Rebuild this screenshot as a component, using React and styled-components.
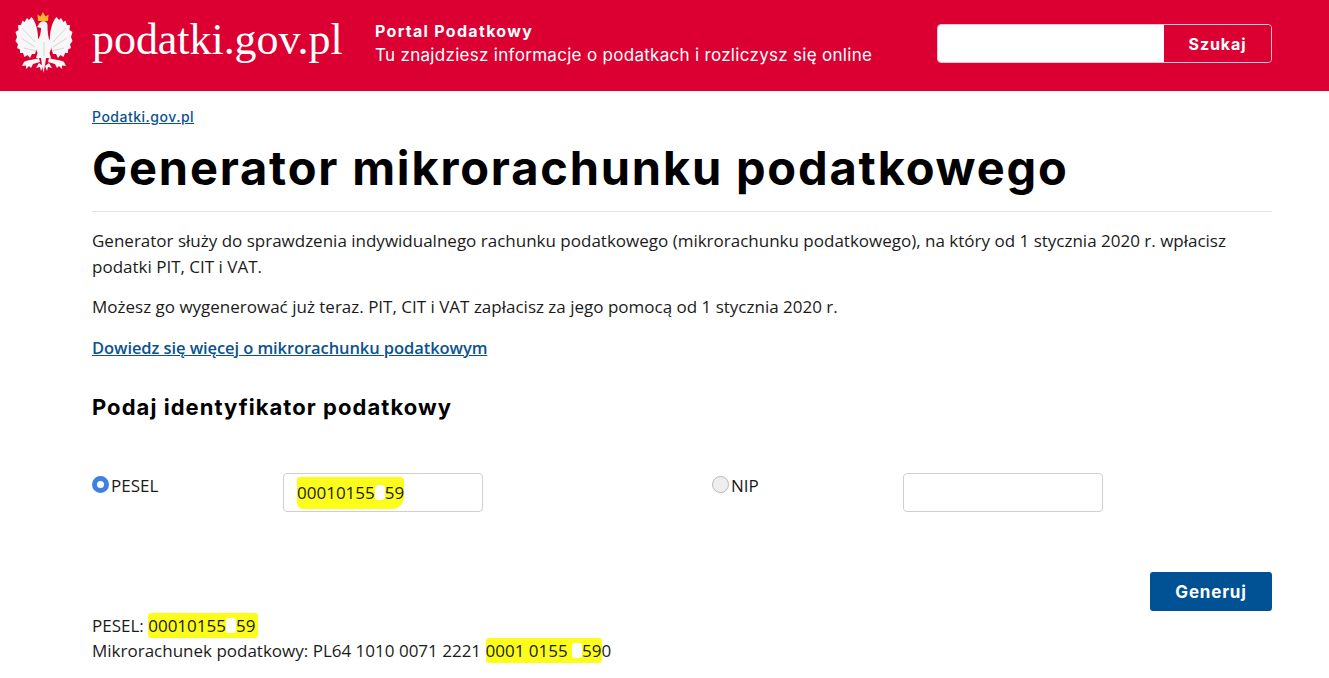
import React from "react";
import styled, { createGlobalStyle } from "styled-components";

const Global = createGlobalStyle`
  html, body { margin: 0; padding: 0; background: #fff; }
  body { font-family: "Open Sans", "Liberation Sans", sans-serif; color: #1b1b1b; font-size: 17px; }
`;
const display = `Inter, "Open Sans", sans-serif`;

const Header = styled.header`
  height: 91px; background: #dc0032; display: flex; align-items: center; color: #fff;
`;
const Brand = styled.div`
  width: 375px; flex: none; display: flex; align-items: center; padding-left: 15px; box-sizing: border-box;
`;
const Logo = styled.div`
  font-family: "Liberation Serif", serif; font-size: 44px; letter-spacing: -0.05px; margin-left: 19px; line-height: 1; margin-top: -12px; white-space: nowrap;
`;
const Tagline = styled.div`
  width: 562px; flex: none; font-family: ${display}; margin-top: -5px;
`;
const TagTitle = styled.div`
  font-size: 16px; font-weight: 700; line-height: 24px; letter-spacing: 1.3px;
`;
const TagText = styled.div`
  font-size: 17px; line-height: 25px; letter-spacing: 0.3px; white-space: nowrap; font-weight: 400;
`;
const Search = styled.form`
  display: flex; width: 335px; height: 39px; box-sizing: border-box; border: 1px solid #f7c6d2; border-radius: 4px; overflow: hidden; margin-top: -4px;
`;
const SearchInput = styled.div`
  flex: none; width: 226px; background: #fff;
`;
const SearchButton = styled.button`
  flex: 1; border: 0; background: #dc0032; color: #fff; font-family: ${display}; font-size: 16px; font-weight: 700; letter-spacing: 0.9px; padding: 0;
`;
const Main = styled.main`
  padding: 0 57px 0 92px;
`;
const Crumb = styled.a`
  display: block; padding-top: 18px; font-family: ${display}; font-size: 14px; font-weight: 500; line-height: 16px; color: #0b5290; text-decoration: underline; width: max-content; letter-spacing: 0.5px;
`;
const Title = styled.h1`
  margin: 17px 0 0; font-family: ${display}; font-size: 47px; line-height: 52px; font-weight: 700; color: #000; letter-spacing: 1.8px; padding-bottom: 17px; border-bottom: 1px solid #e2e2e2; white-space: nowrap;
`;
const Para = styled.p`
  margin: 0 0 14px; font-size: 17px; line-height: 26px;
  &:first-of-type { margin-top: 16px; }
`;
const BodyLink = styled.a`
  font-weight: 600; color: #0b5290; text-decoration: underline; font-size: 16.5px; line-height: 26px; display: block; margin-top: 15px; letter-spacing: -0.08px;
`;
const SubTitle = styled.h2`
  margin: 32px 0 0; font-family: ${display}; font-size: 22px; line-height: 28px; font-weight: 700; color: #000; letter-spacing: 1.05px;
`;
const FormGrid = styled.div`
  display: grid; grid-template-columns: 191px 200px 229px 191px 200px; margin-top: 52px; align-items: start;
`;
const RadioLabel = styled.label`
  display: flex; align-items: flex-start; line-height: 26px; gap: 2px; font-size: 17px;
`;
const Radio = styled.span`
  width: 17px; height: 17px; border-radius: 50%; box-sizing: border-box; margin-top: 3px; flex: none;
  ${p => p.$on
    ? `background: #fff; border: 5px solid #3f7fe8;`
    : `background: #eee; border: 1px solid #b9b9b9;`}
`;
const FieldBox = styled.div`
  height: 39px; box-sizing: border-box; border: 1px solid #cfcfcf; border-radius: 4px; background: #fff; padding: 0 13px; display: flex; align-items: center; font-size: 17px;
`;
const Mark = styled.span`
  background: #fdfd1c; border-radius: ${p => p.$blob ? "2px 4px 12px 6px" : "3px"}; padding: ${p => p.$blob ? "4px 0 5px" : "1px 0"};
`;
const MarkWide = styled(Mark)`
  padding: 1px 3px 1px 0;
`;
const Erased = styled.span`
  display: inline-block; width: ${p => p.$w}px; height: 15px; background: #fff; border-radius: 3px; vertical-align: -1px;
`;
const Actions = styled.div`
  display: flex; justify-content: flex-end; margin-top: 60px;
`;
const Generate = styled.button`
  width: 122px; height: 39px; border: 0; border-radius: 3px; background: #005295; color: #fff; font-family: ${display}; font-size: 17px; font-weight: 700; letter-spacing: 0.8px; padding: 0;
`;
const Result = styled.div`
  font-size: 17px; line-height: 25px; margin-top: 2px;
`;
const EagleMark = styled.svg`
  flex: none; margin-top: -6px;
`;

const Eagle = () => (
  <EagleMark width="58" height="62" viewBox="0 0 58 62" aria-hidden="true">
    <path d="M23 9 L22.500 2.500 L25.500 4.500 L28 0 L30.500 4.500 L33.500 2.500 L33 9 Z" fill="#f4b72c" />
    <g fill="#f7f7f7">
      <path d="M23.500 13 C25 8 33 8 32.500 14 C32.500 19 33 23 34 27 C38 30 37 36 34.500 41 L36 46 L31 46 L30 53 L28.500 61 L27 53 L26 46 L21 46 L22.500 41 C20 36 19.500 30 24 26 C25.500 23 26 19 26 16 L22 15 Z" />
      <path d="M23 28 C23.500 20 21 10 16.500 5 L14 8 L12 6 L9.500 10 L7.500 8.500 L6 13 L3 13 L3.500 18 L0.500 20 L2 25 L0.500 29 L3 32.500 L2 36 L5 37.500 L5 41 L8 41 L9.500 45 L12.500 43 L15 46 L17 42 L20 42 L21.500 37 Z" />
      <path d="M35 28 C34.500 20 37 10 41.500 5 L44 8 L46 6 L48.500 10 L50.500 8.500 L52 13 L55 13 L54.500 18 L57.500 20 L56 25 L57.500 29 L55 32.500 L56 36 L53 37.500 L53 41 L50 41 L48.500 45 L45.500 43 L43 46 L41 42 L38 42 L36.500 37 Z" />
      <path d="M24 46 C20 48 14 47 9 50 L7 54 L11 53.500 L11 57 L14 54 L16 56 L18 52 L25 50 Z" />
      <path d="M34 46 C38 48 44 47 49 50 L51 54 L47 53.500 L47 57 L44 54 L42 56 L40 52 L33 50 Z" />
      <path d="M24 51 L21 56 L25 55 L26 59 L28 54 Z" />
      <path d="M34 51 L37 56 L33 55 L32 59 L30 54 Z" />
    </g>
    <g stroke="#c9d0d3" strokeWidth="0.8" fill="none">
      <path d="M20 30 L7 16 M20 35 L6 26 M21 39 L9 36" />
      <path d="M38 30 L51 16 M38 35 L52 26 M37 39 L49 36" />
      <path d="M29 30 L29 44" />
    </g>
  </EagleMark>
);

export default function App() {
  return (
    <>
      <Global />
      <Header>
        <Brand>
          <Eagle />
          <Logo>podatki.gov.pl</Logo>
        </Brand>
        <Tagline>
          <TagTitle>Portal Podatkowy</TagTitle>
          <TagText>Tu znajdziesz informacje o podatkach i rozliczysz się online</TagText>
        </Tagline>
        <Search>
          <SearchInput />
          <SearchButton type="button">Szukaj</SearchButton>
        </Search>
      </Header>
      <Main>
        <Crumb>Podatki.gov.pl</Crumb>
        <Title>Generator mikrorachunku podatkowego</Title>
        <Para>Generator służy do sprawdzenia indywidualnego rachunku podatkowego (mikrorachunku podatkowego), na który od 1 stycznia 2020 r. wpłacisz podatki PIT, CIT i VAT.</Para>
        <Para>Możesz go wygenerować już teraz. PIT, CIT i VAT zapłacisz za jego pomocą od 1 stycznia 2020 r.</Para>
        <BodyLink>Dowiedz się więcej o mikrorachunku podatkowym</BodyLink>
        <SubTitle>Podaj identyfikator podatkowy</SubTitle>
        <FormGrid>
          <RadioLabel><Radio $on />PESEL</RadioLabel>
          <FieldBox><Mark $blob>00010155<Erased $w={10} />59</Mark></FieldBox>
          <span />
          <RadioLabel><Radio />NIP</RadioLabel>
          <FieldBox />
        </FormGrid>
        <Actions><Generate type="button">Generuj</Generate></Actions>
        <Result>
          <div>PESEL: <MarkWide>00010155<Erased $w={10} />59</MarkWide></div>
          <div>Mikrorachunek podatkowy: PL64 1010 0071 2221 <Mark>0001 0155 <Erased $w={10} />59</Mark>0</div>
        </Result>
      </Main>
    </>
  );
}
